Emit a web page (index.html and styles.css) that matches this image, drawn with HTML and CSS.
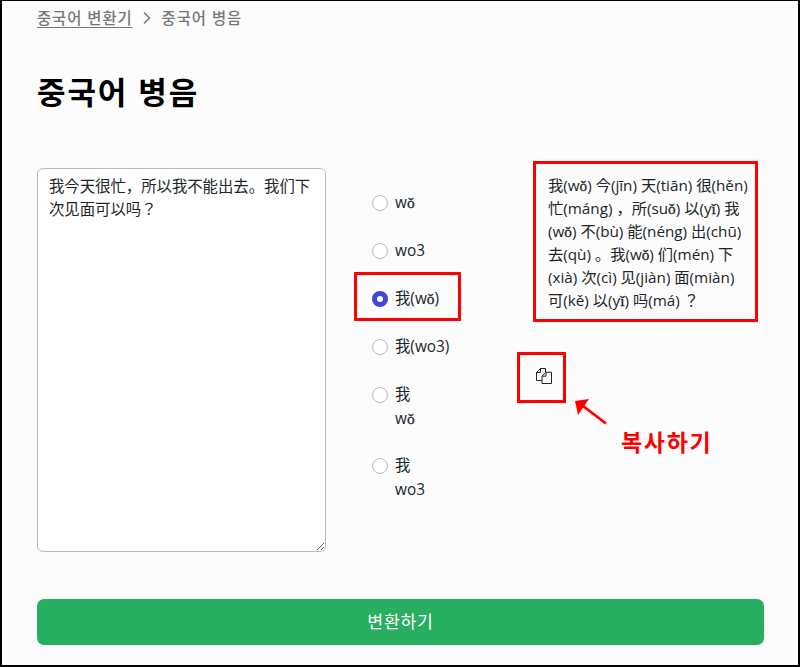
FILE: index.html
```html
<!DOCTYPE html>
<html lang="ko">
<head>
  <meta charset="UTF-8">
  <meta name="viewport" content="width=device-width, initial-scale=1.0">
  <title>중국어 병음</title>
  <link rel="stylesheet" href="styles.css">
</head>
<body>
  <div class="page">
    <nav class="breadcrumb">
      <a href="#">중국어 변환기</a>
      <svg class="chevron" viewBox="0 0 8 14"><path d="M1 1.5L6.5 7L1 12.5"/></svg>
      <span>중국어 병음</span>
    </nav>

    <h1>중국어 병음</h1>

    <form class="converter">
      <div class="columns">
        <textarea class="source">我今天很忙，所以我不能出去。我们下次见面可以吗？</textarea>

        <div class="options" lang="zh">
          <label><input type="radio" name="style"><span>w<i class="caron">ǒ</i></span></label>
          <label><input type="radio" name="style"><span>wo3</span></label>
          <label><input type="radio" name="style" checked><span>我(w<i class="caron">ǒ</i>)</span></label>
          <label><input type="radio" name="style"><span>我(wo3)</span></label>
          <label><input type="radio" name="style"><span>我<br>w<i class="caron">ǒ</i></span></label>
          <label><input type="radio" name="style"><span>我<br>wo3</span></label>
        </div>

        <div class="result">
          <p>我(w<i class="caron">ǒ</i>) 今(jīn) 天(tiān) 很(hěn)<br>忙(máng) ，所(su<i class="caron">ǒ</i>) 以(y<i class="caron">ǐ</i>) 我<br>(w<i class="caron">ǒ</i>) 不(bù) 能(néng) 出(chū)<br>去(qù) 。我(w<i class="caron">ǒ</i>) 们(mén) 下<br>(xià) 次(cì) 见(jiàn) 面(miàn)<br>可(kě) 以(y<i class="caron">ǐ</i>) 吗(má) ？</p>
          <button type="button" class="copy" aria-label="복사하기">
            <svg viewBox="0 0 16 16"><path d="M6 12.500H.5V4.5L4.5.5H9.5V4M.5 4.5H4.5V.5M6 8.2L10 4.2H15.5V15.5H6ZM6 8.2H10V4.2"/></svg>
          </button>
        </div>
      </div>

      <button type="button" class="submit">변환하기</button>
    </form>

    <!-- Guide marks -->
    <div class="mark mark-option"></div>
    <div class="mark mark-result"></div>
    <div class="mark mark-copy"></div>
    <svg class="arrow" viewBox="0 0 34 28"><path class="shaft" d="M32 25.500L9 8"/><path class="head" d="M1 3L15 1L4 17Z"/></svg>
    <strong class="mark-text">복사하기</strong>
  </div>
</body>
</html>
```
FILE: styles.css
```css
* {
  box-sizing: border-box;
  margin: 0;
  padding: 0;
}

body {
  font-family: "Open Sans", "Noto Sans CJK KR", sans-serif;
  font-size: 15.36px;
  line-height: 23px;
  color: #212529;
  background-color: #fcfcfc;
}

:lang(zh) {
  font-family: "Open Sans", "Noto Sans CJK SC", sans-serif;
}

.page {
  position: relative;
  width: 800px;
  height: 667px;
  padding: 5px 35px 0;
  border: 2px solid #000;
  border-top-width: 1px;
  overflow: hidden;
}

/* Breadcrumb */
.breadcrumb {
  display: flex;
  align-items: center;
  height: 24px;
  font-size: 15.4px;
  font-weight: 500;
  letter-spacing: 0.95px;
  color: #777;
}

.breadcrumb a {
  color: inherit;
  text-underline-offset: 3px;
}

.chevron {
  width: 8px;
  height: 14px;
  margin: 0 11px 0 10px;
  fill: none;
  stroke: #777;
  stroke-width: 1.5;
}

h1 {
  margin-top: 38px;
  font-size: 31px;
  line-height: 48px;
  font-weight: 600;
  letter-spacing: 1.9px;
  color: #000;
}

/* Converter form */
.columns {
  display: grid;
  grid-template-columns: 289px 210px 1fr;
  height: 384px;
  margin-top: 52px;
}

.columns .source {
  width: 289px;
  height: 384px;
  padding: 6px 11px;
  font-family: "Open Sans", "Noto Sans CJK JP", sans-serif;
  font-feature-settings: "locl" 0;
  font-size: 15.36px;
  line-height: 23px;
  color: #212529;
  background: #fff;
  border: 1px solid #bbb;
  border-radius: 6px;
  outline: none;
  overflow: hidden;
  resize: both;
}

.options {
  padding: 23px 0 0 46px;
}

.options label {
  display: flex;
  align-items: flex-start;
  gap: 7px;
  margin-bottom: 24px;
  line-height: 24px;
}

.options label:nth-child(5) {
  margin-bottom: 23px;
}

.options input {
  appearance: none;
  width: 16px;
  height: 16px;
  margin-top: 4px;
  background: #fff;
  border: 1px solid #bbb;
  border-radius: 50%;
}

.options input:checked {
  border: 5px solid #4048d4;
}

.caron {
  font-family: "Liberation Serif", serif;
  font-style: normal;
  -webkit-text-stroke: 0.3px #212529;
}

.result {
  padding: 6px 0 0 12px;
  font-family: "Open Sans", "Noto Sans CJK JP", sans-serif;
  font-feature-settings: "locl" 0;
  font-size: 15.25px;
  white-space: nowrap;
}

.copy {
  display: block;
  width: 16px;
  height: 16px;
  margin: 56px 0 0 -12px;
  background: none;
  border: 0;
}

.copy svg {
  display: block;
  width: 16px;
  height: 16px;
  fill: none;
  stroke: #212529;
}

.submit {
  display: block;
  width: 727px;
  height: 46px;
  margin-top: 47px;
  padding-bottom: 4px;
  font-family: inherit;
  font-size: 17.3px;
  letter-spacing: 0.7px;
  color: #fff;
  background: #28ae61;
  border: 0;
  border-radius: 7px;
}

/* Guide marks drawn over the page */
.mark {
  position: absolute;
  border: 3px solid #f00;
}

.mark-option {
  left: 352px;
  top: 271px;
  width: 107px;
  height: 49px;
}

.mark-result {
  left: 531px;
  top: 160px;
  width: 225px;
  height: 161px;
}

.mark-copy {
  left: 515px;
  top: 351px;
  width: 49px;
  height: 51px;
}

.arrow {
  position: absolute;
  left: 572px;
  top: 397px;
  width: 34px;
  height: 28px;
}

.shaft {
  stroke: #f00;
  stroke-width: 2.8;
}

.head {
  fill: #f00;
}

.mark-text {
  position: absolute;
  left: 619px;
  top: 425px;
  font-size: 23px;
  line-height: 32px;
  letter-spacing: 1.7px;
  color: #f00;
}
```
